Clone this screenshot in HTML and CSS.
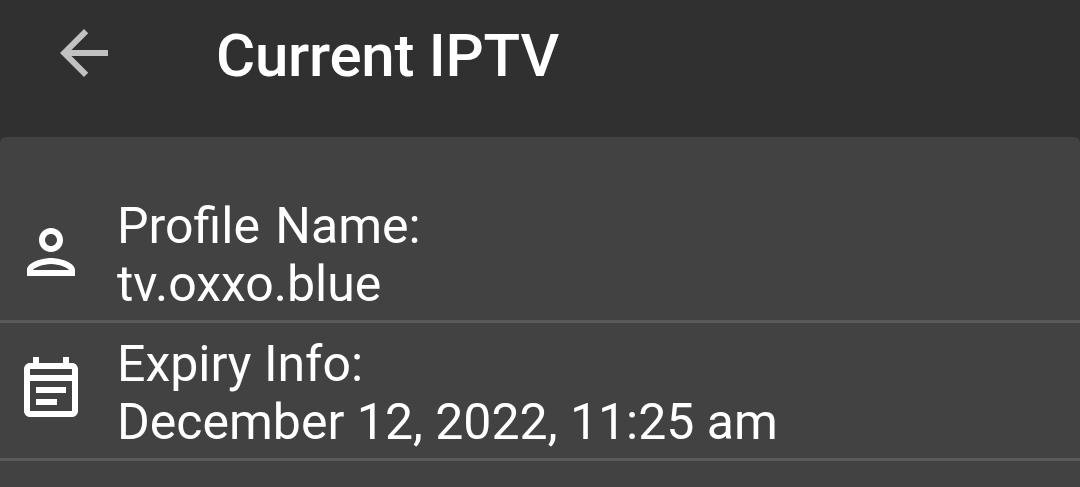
FILE: index.html
```html
<!DOCTYPE html>
<html lang="en">
<head>
  <meta charset="UTF-8" />
  <meta name="viewport" content="width=device-width, initial-scale=1.0"/>
  <title>Current IPTV</title>
  <link rel="stylesheet" href="styles.css">
</head>
<body>
  <header class="topbar">
    <svg class="back" viewBox="4 4 16 16"><path d="M20 11H7.83l5.59-5.59L12 4l-8 8 8 8 1.41-1.41L7.83 13H20v-2z"/></svg>
    <h1>Current IPTV</h1>
  </header>

  <main class="card">
    <!-- Profile -->
    <div class="row">
      <div class="icon">
        <svg class="person" viewBox="4 4 16 16"><path d="M12 6c1.1 0 2 .9 2 2s-.9 2-2 2-2-.9-2-2 .9-2 2-2m0 10c2.7 0 5.8 1.29 6 2H6c.23-.72 3.31-2 6-2m0-12C9.79 4 8 5.79 8 8s1.79 4 4 4 4-1.79 4-4-1.79-4-4-4zm0 10c-2.67 0-8 1.34-8 4v2h16v-2c0-2.66-5.33-4-8-4z"/></svg>
      </div>
      <div class="info">
        <div class="label name">Profile Name:</div>
        <div class="value">tv.oxxo.blue</div>
      </div>
    </div>

    <!-- Expiry -->
    <div class="row">
      <div class="icon">
        <svg class="calendar" viewBox="3 1 18 20"><path fill-rule="evenodd" d="M18 3V1h-2v2H8V1H6v2H5c-1.1 0-2 .9-2 2v14c0 1.1.9 2 2 2h14c1.1 0 2-.9 2-2V5c0-1.1-.9-2-2-2h-1zM5 5h14v2H5V5zm0 4h14v10H5V9zm2 2h10v2H7v-2zm0 4h7v2H7v-2z"/></svg>
      </div>
      <div class="info">
        <div class="label">Expiry Info:</div>
        <div class="value">December 12, 2022, 11:25 am</div>
      </div>
    </div>
  </main>
</body>
</html>
```
FILE: styles.css
```css
* {
  box-sizing: border-box;
}

body {
  margin: 0;
  height: 487px;
  overflow: hidden;
  font-family: Roboto, sans-serif;
  background: #303030;
  color: #fff;
}

.topbar {
  height: 137px;
  padding: 19px 0 0 60px;
  display: flex;
  align-items: flex-start;
  gap: 108px;
}

.back {
  width: 48px;
  height: 48px;
  margin-top: 10px;
  fill: #c1c1c1;
}

.topbar h1 {
  margin: 0;
  font-size: 60px;
  line-height: 74px;
  font-weight: 500;
  letter-spacing: -0.25px;
}

.card {
  height: 350px;
  padding-top: 48px;
  background: #424242;
  border-radius: 6px 6px 0 0;
}

.row {
  height: 138px;
  padding-top: 12px;
  display: flex;
  align-items: flex-start;
  border-bottom: 3px solid #5a5a5a;
}

.icon {
  width: 117px;
  padding-left: 24px;
  display: flex;
}

.icon svg {
  fill: #fff;
}

.person {
  width: 48px;
  height: 48px;
  margin: 31px 0 0 3px;
}

.calendar {
  width: 54px;
  height: 60px;
  margin-top: 22px;
}

.info {
  font-size: 50px;
  line-height: 58px;
}

.name {
  word-spacing: 3px;
}
```
